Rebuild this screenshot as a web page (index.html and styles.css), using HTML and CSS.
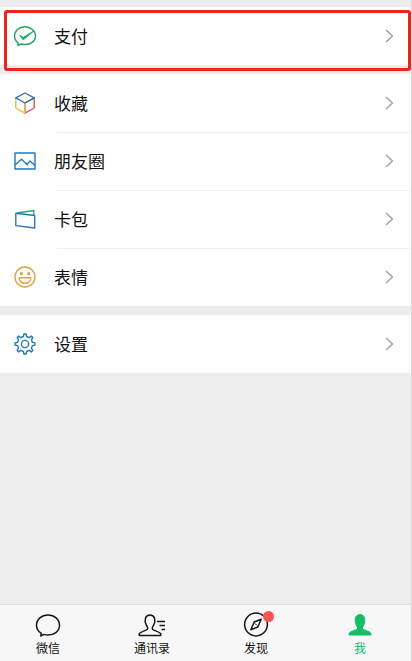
FILE: index.html
```html
<!DOCTYPE html>
<html lang="zh-CN">
<head>
<meta charset="utf-8">
<meta name="viewport" content="width=device-width, initial-scale=1">
<title>我</title>
<link rel="stylesheet" href="styles.css">
</head>
<body>
<main class="menu">
  <section class="group group-pay">
    <a class="row" href="#pay">
      <svg class="icon" viewBox="0 0 24 24" stroke="#1fa463"><path d="M5.200 19C2.800 17.200 1.500 14.800 1.500 12C1.500 7 6 2.800 12 2.800S22.500 7 22.500 12S18 20.500 12 20.500Q10 20.500 8 20L4.800 21.600Z"/><path d="M6.800 11.300L10.300 13.400L20.500 7.200L10.300 15.800Z" fill="#1fa463" stroke-width="1"/></svg>
      <span class="label">支付</span>
      <svg class="chevron" viewBox="0 0 9 14"><path d="M1 1L7.500 7L1 13"/></svg>
    </a>
    <div class="highlight"></div>
  </section>
  <section class="group">
    <a class="row" href="#favorites">
      <svg class="icon" viewBox="0 0 24 24"><path d="M21.200 6.800V17L12 22.200V12Z" stroke="#db5560"/><path d="M12 12V22.200L2.800 17V6.800" stroke="#edbd45"/><path d="M2.800 6.800L12 2L21.200 6.800L12 12Z" stroke="#2478b5"/></svg>
      <span class="label">收藏</span>
      <svg class="chevron" viewBox="0 0 9 14"><path d="M1 1L7.500 7L1 13"/></svg>
    </a>
    <a class="row" href="#moments">
      <svg class="icon" viewBox="0 0 24 24" stroke="#2478b5"><path d="M2 4H22V20H2Z"/><path d="M2 16L8.500 10.200L14.800 16.200M13 14.500L14.500 14.700L17 12L22 16.500"/></svg>
      <span class="label">朋友圈</span>
      <svg class="chevron" viewBox="0 0 9 14"><path d="M1 1L7.500 7L1 13"/></svg>
    </a>
    <a class="row" href="#cards">
      <svg class="icon" viewBox="0 0 24 24" stroke="#2478b5"><path d="M4 6L20.800 3.500V8" stroke="#2ba679"/><path d="M2.800 6.200L21.700 8.500V21L2.800 18.600Z"/></svg>
      <span class="label">卡包</span>
      <svg class="chevron" viewBox="0 0 9 14"><path d="M1 1L7.500 7L1 13"/></svg>
    </a>
    <a class="row" href="#stickers">
      <svg class="icon" viewBox="0 0 24 24" stroke="#dda044"><circle cx="12" cy="12" r="10"/><path d="M6.200 12.800H17.800C17.800 20 6.200 20 6.200 12.800Z"/><circle cx="8.300" cy="8.700" r="1.600" fill="#dda044" stroke="none"/><circle cx="15.700" cy="8.700" r="1.600" fill="#dda044" stroke="none"/></svg>
      <span class="label">表情</span>
      <svg class="chevron" viewBox="0 0 9 14"><path d="M1 1L7.500 7L1 13"/></svg>
    </a>
  </section>
  <section class="group">
    <a class="row" href="#settings">
      <svg class="icon" viewBox="0 0 24 24" stroke="#2478b5"><path d="M10.400 4.500L10.900 2H13.100L13.600 4.500L16.200 5.600L18.300 4.100L19.900 5.700L18.400 7.800L19.500 10.400L22 10.900V13.100L19.500 13.600L18.400 16.200L19.900 18.300L18.300 19.900L16.200 18.400L13.600 19.500L13.100 22H10.900L10.400 19.500L7.800 18.400L5.700 19.900L4.100 18.300L5.600 16.200L4.500 13.600L2 13.100V10.900L4.500 10.400L5.600 7.800L4.100 5.700L5.700 4.100L7.800 5.600Z"/><circle cx="12" cy="12" r="3.600"/></svg>
      <span class="label">设置</span>
      <svg class="chevron" viewBox="0 0 9 14"><path d="M1 1L7.500 7L1 13"/></svg>
    </a>
  </section>
</main>
<nav class="tabbar">
  <a class="tab" href="#chats">
    <svg class="tab-icon" viewBox="0 0 28 28"><path d="M7.200 22.200C4 20.200 2.500 17.500 2.500 14.200C2.500 8.300 7.600 4 14 4S25.500 8.300 25.500 14.200S20.400 24 14 24Q11.600 24 9.800 23.400L6.800 25Z"/></svg>
    <span>微信</span>
  </a>
  <a class="tab" href="#contacts">
    <svg class="tab-icon" viewBox="0 0 28 28"><path d="M1.300 24.500V22.500C4 20.200 8 19.700 9.500 18.200C10.300 17 9.300 15.800 8.400 14.200C5.800 9 7.300 4 12 4S18.200 9 15.600 14.200C14.700 15.800 13.700 17 14.500 18.200C16 19.700 20 20.200 22.700 22.500V24.500Z"/><path d="M19 10.500H27M21.500 14.500H27M23.500 18.500H27"/></svg>
    <span>通讯录</span>
  </a>
  <a class="tab" href="#discover">
    <span class="tab-figure">
      <svg class="tab-icon" viewBox="0 0 28 28"><circle cx="14" cy="13.500" r="11.400"/><path d="M19.200 8.300L15.800 16L8.800 18.700L12.200 11Z"/><path d="M13 12.500L15 14.500" stroke-width="1"/></svg>
      <i class="badge"></i>
    </span>
    <span>发现</span>
  </a>
  <a class="tab active" href="#me">
    <svg class="tab-icon" viewBox="0 0 28 28"><path d="M3 24V22.500C5 19.500 10 19.500 11.300 18C12 16.500 11 15.500 10.200 14C8 8.500 9.500 3.500 14 3.500S20 8.500 17.800 14C17 15.500 16 16.500 16.700 18C18 19.500 23 19.500 25 22.500V24Z"/></svg>
    <span>我</span>
  </a>
</nav>
</body>
</html>
```
FILE: styles.css
```css
* {
  box-sizing: border-box;
}

body {
  margin: 0;
  min-height: 100vh;
  display: flex;
  flex-direction: column;
  background: #ededed;
  color: #111;
  font-family: "Noto Sans CJK SC", sans-serif;
  overflow-x: hidden;
}

a {
  color: inherit;
  text-decoration: none;
}

svg {
  display: block;
  flex: none;
  fill: none;
  stroke-linejoin: round;
}

.menu {
  flex: 1;
  display: flex;
  flex-direction: column;
  gap: 9px;
  padding-top: 7px;
  border-right: 1px solid #d8d8d8;
}

.group {
  background: #fff;
}

.group-pay {
  position: relative;
}

.highlight {
  position: absolute;
  inset: 3px 0 -6px 4px;
  border: 3px solid #e8261c;
  border-radius: 3px;
  pointer-events: none;
}

.row {
  display: flex;
  align-items: center;
  height: 58px;
  padding: 0 17px 0 13px;
  position: relative;
}

.row + .row::before {
  content: "";
  position: absolute;
  top: 0;
  left: 57px;
  right: 0;
  border-top: 1px solid #f0f0f0;
}

.icon {
  width: 24px;
  height: 24px;
  margin-right: 17px;
  stroke-width: 1.4;
}

.label {
  flex: 1;
  font-size: 17px;
  line-height: 24px;
}

.chevron {
  width: 9px;
  height: 14px;
  stroke: #a0a0a0;
  stroke-width: 1.4;
}

.tabbar {
  display: flex;
  height: 57px;
  margin-left: -4px;
  padding-top: 6px;
  background: #f7f7f7;
  border-top: 1px solid #dfdfdf;
  border-right: 1px solid #d8d8d8;
}

.tab {
  flex: 1;
  display: flex;
  flex-direction: column;
  align-items: center;
  font-size: 12px;
  line-height: 18px;
}

.tab:last-child {
  margin-right: -1px;
}

.tab-icon {
  width: 28px;
  height: 28px;
  stroke: #161616;
  stroke-width: 1.5;
}

.tab-figure {
  position: relative;
}

.badge {
  position: absolute;
  top: 0;
  right: -4px;
  width: 11px;
  height: 11px;
  border-radius: 50%;
  background: #f55555;
}

.active {
  color: #13b563;
}

.active .tab-icon {
  fill: #13bf65;
  stroke: #13bf65;
  stroke-width: 1;
}
```
